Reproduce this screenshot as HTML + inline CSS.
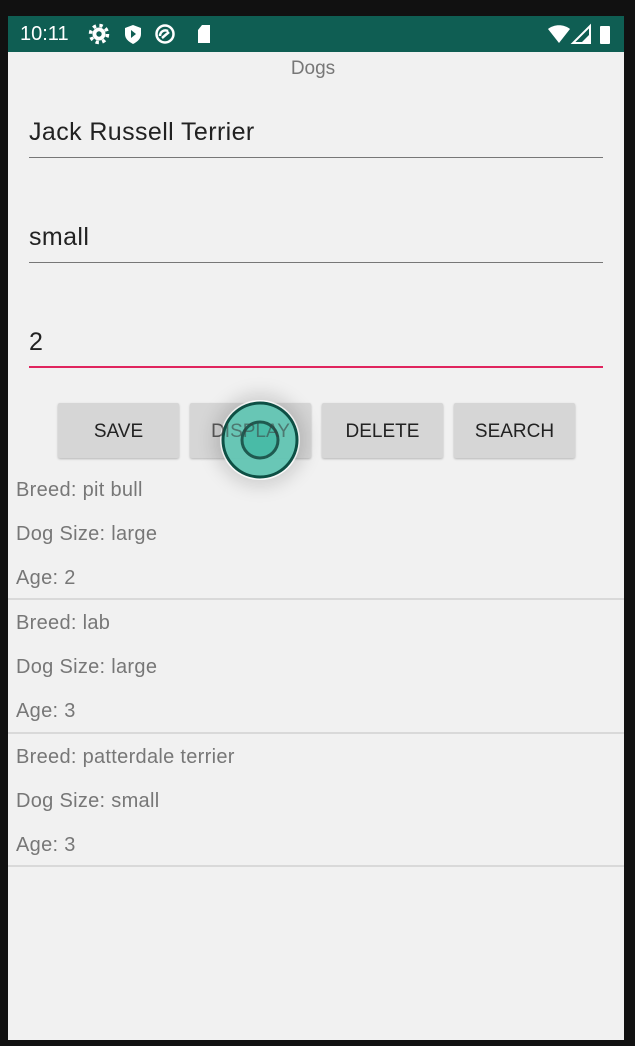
<!DOCTYPE html><html><head><style>
body{margin:0;width:635px;height:1046px;background:#111;position:relative;overflow:hidden;font-family:"Liberation Sans",sans-serif}
.scr{position:absolute;left:8px;top:16px;width:616px;height:1024px;background:#f1f1f1}
.sb{position:absolute;left:0;top:0;width:616px;height:36px;background:#0f5e53;color:#fff}
.t{position:absolute;font-size:14px}
.in{position:absolute;left:21px;width:574px;font-size:25px;letter-spacing:0.4px;color:#222;border-bottom:1px solid #777}
.btn{position:absolute;top:387px;width:121px;height:55px;background:#d6d6d6;box-shadow:0 1px 2px rgba(0,0,0,.25);border-radius:2px;font-size:19px;color:#222;text-align:center;line-height:57px}
.r{position:absolute;left:8px;font-size:20px;letter-spacing:0.3px;color:#777}
.hr{position:absolute;left:0;width:616px;height:2px;background:#d9d9d9}
</style></head><body>
<div class="scr">
<div class="sb">
<div style="position:absolute;left:12px;top:7px;font-size:20px">10:11</div>
<svg style="position:absolute;left:80px;top:7px" width="130" height="24" viewBox="0 0 130 24">
<g fill="#fff"><circle cx="11" cy="11" r="6.5"/><circle cx="11" cy="11" r="8.5" fill="none" stroke="#fff" stroke-width="3.5" stroke-dasharray="3.3 3.4"/><circle cx="11" cy="11" r="2.7" fill="#0f5e53"/>
<path d="M45 2l8 3v6c0 5-4 8-8 10c-4-2-8-5-8-10V5z"/><path d="M43 7l5 4l-5 4z" fill="#0f5e53"/>
<circle cx="77" cy="11" r="8.5" fill="none" stroke="#fff" stroke-width="2.5"/><path d="M72 13c0-4 4-7 8-5M74 15l7-6" stroke="#fff" stroke-width="2.5" fill="none"/>
<path d="M114 2h8v18h-12v-13z"/></g></svg>
<svg style="position:absolute;left:538px;top:7px" width="70" height="24" viewBox="0 0 70 24">
<path d="M2 6c6-5 16-5 22 0l-11 14z" fill="#fff"/>
<path d="M44 3v17h-17z" fill="none" stroke="#fff" stroke-width="2"/><path d="M44 11v9h-9z" fill="#fff"/>
<rect x="54" y="3" width="10" height="18" rx="1" fill="#fff"/></svg>
</div>
<div class="t" style="left:0;width:610px;text-align:center;top:42px;font-size:19px;color:#777">Dogs</div>
<div class="in" style="top:102px;height:39px">Jack Russell Terrier</div>
<div class="in" style="top:207px;height:39px">small</div>
<div class="in" style="top:312px;height:38px;border-bottom:2px solid #e0245e">2</div>
<div class="btn" style="left:50px">SAVE</div>
<div class="btn" style="left:182px;color:#777">DISPLAY</div>
<div class="btn" style="left:314px">DELETE</div>
<div class="btn" style="left:446px">SEARCH</div>
<div style="position:absolute;left:212px;top:384px;width:80px;height:80px;border-radius:50%;box-shadow:0 0 18px 6px rgba(0,0,0,.15)"></div>
<svg style="position:absolute;left:210px;top:382px" width="84" height="84"><circle cx="42" cy="42" r="40" fill="rgba(255,255,255,.6)"/><circle cx="42" cy="42" r="37" fill="rgba(80,190,170,.85)" stroke="#0d4f44" stroke-width="3"/><circle cx="42" cy="42" r="18" fill="rgba(70,185,165,.9)" stroke="#1f5a50" stroke-width="3"/></svg>
<div style="position:absolute;left:182px;top:387px;width:121px;height:55px;text-align:center;line-height:57px;font-size:19px;color:rgba(60,60,60,.55)">DISPLAY</div>
<div class="r" style="top:463px">Breed: pit bull</div>
<div class="r" style="top:507px">Dog Size: large</div>
<div class="r" style="top:551px">Age: 2</div>
<div class="hr" style="top:582px"></div>
<div class="r" style="top:596px">Breed: lab</div>
<div class="r" style="top:640px">Dog Size: large</div>
<div class="r" style="top:684px">Age: 3</div>
<div class="hr" style="top:716px"></div>
<div class="r" style="top:730px">Breed: patterdale terrier</div>
<div class="r" style="top:774px">Dog Size: small</div>
<div class="r" style="top:818px">Age: 3</div>
<div class="hr" style="top:849px"></div>
</div>
</body></html>
